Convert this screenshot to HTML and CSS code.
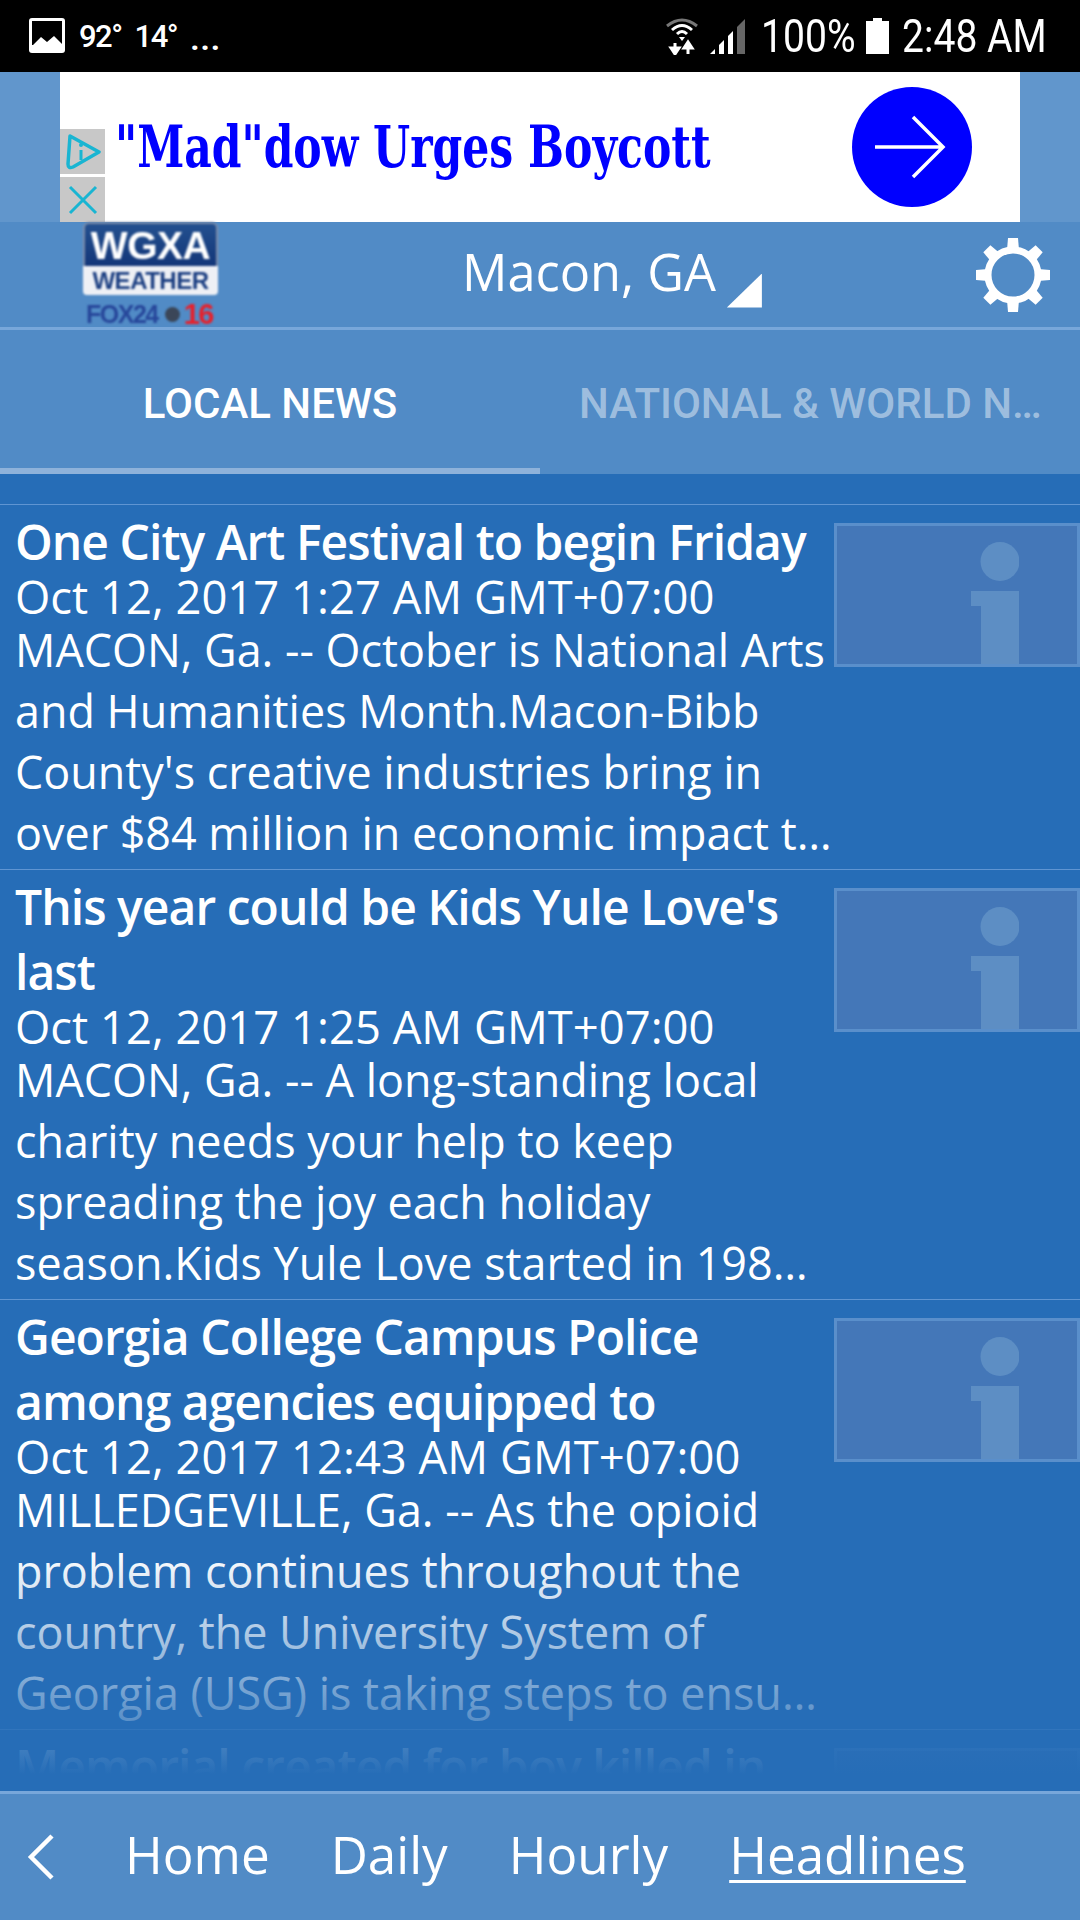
FILE: index.html
```html
<!DOCTYPE html>
<html lang="en">
<head>
  <meta charset="UTF-8">
  <meta name="viewport" content="width=device-width, initial-scale=1.0">
  <title>WGXA Weather Headlines</title>
  <link rel="stylesheet" href="styles.css">
</head>
<body>
  <div class="app">
    <div class="status-bar">
      <div class="status-left">
        <svg class="status-photo" width="36" height="36" viewBox="0 0 36 36">
          <rect x="0" y="0" width="36" height="35" rx="3" fill="#fff"/>
          <rect x="3" y="3" width="30" height="24" fill="#000"/>
          <path d="M3 28 L12 19 L18 24 L25 18 L33 26 L33 32 L3 32 Z" fill="#fff"/>
        </svg>
        <span class="temp">92°</span>
        <span class="temp">14°</span>
        <span class="more">...</span>
      </div>
      <div class="status-right">
        <svg class="status-wifi" width="32" height="38" viewBox="0 0 32 38">
          <path d="M1 9 Q16 -3 31 9" fill="none" stroke="#777" stroke-width="3"/>
          <path d="M6 13 Q16 4 26 13" fill="none" stroke="#fff" stroke-width="3"/>
          <path d="M11 17 Q16 12 21 17" fill="none" stroke="#fff" stroke-width="3"/>
          <path d="M13 20 L19 20 L16 24 Z" fill="#fff"/>
          <path d="M9 26 L9 33 M5 31 L9 37 L13 31 Z" stroke="#fff" stroke-width="3" fill="#fff"/>
          <path d="M22 37 L22 29 M18 31 L22 25 L26 31 Z" stroke="#fff" stroke-width="3" fill="#fff"/>
        </svg>
        <svg class="status-signal" width="36" height="36" viewBox="0 0 36 36">
          <path d="M0 36 L5 31 L5 36 Z" fill="#fff"/>
          <path d="M9 36 L9 27 L14 22 L14 36 Z" fill="#fff"/>
          <path d="M18 36 L18 18 L23 13 L23 36 Z" fill="#fff"/>
          <path d="M27 36 L27 9 L35 1 L35 36 Z" fill="#666"/>
        </svg>
        <span class="status-text battery-text">100%</span>
        <svg class="status-battery" width="23" height="36" viewBox="0 0 23 36">
          <path d="M7 0 H16 V3 H23 V36 H0 V3 H7 Z" fill="#fff"/>
        </svg>
        <span class="status-text clock-text">2:48 AM</span>
      </div>
    </div>

    <div class="ad-row">
      <div class="ad">
        <div class="ad-chips">
          <div class="ad-chip">
            <svg width="36" height="38" viewBox="0 0 36 38">
              <path d="M5 3 L34 19 L8 34 Q3 36 3 31 Z" fill="none" stroke="#19b5d2" stroke-width="3.5" stroke-linejoin="round"/>
              <path d="M16 17 V27" stroke="#19b5d2" stroke-width="3"/>
              <circle cx="16" cy="12" r="2" fill="#19b5d2"/>
            </svg>
          </div>
          <div class="ad-chip">
            <svg width="30" height="30" viewBox="0 0 30 30">
              <path d="M2 2 L28 28 M28 2 L2 28" stroke="#19b5d2" stroke-width="3"/>
            </svg>
          </div>
        </div>
        <div class="ad-title">"Mad"dow Urges Boycott</div>
        <div class="ad-button">
          <svg class="ad-arrow" width="72" height="64" viewBox="0 0 72 64">
            <path d="M1 32 H69 M39 2 L69 32 L39 62" fill="none" stroke="#fff" stroke-width="3.5"/>
          </svg>
        </div>
      </div>
    </div>

    <header class="app-header">
      <div class="logo">
        <div class="logo-top">WGXA</div>
        <div class="logo-mid">WEATHER</div>
        <div class="logo-bottom"><span class="logo-fox">FOX24</span><span class="logo-abc"></span><span class="logo-num">16</span></div>
      </div>
      <div class="location">
        <span>Macon, GA</span>
        <span class="location-arrow"></span>
      </div>
      <svg class="gear" width="78" height="78" viewBox="0 0 78 78">
        <circle cx="39" cy="39" r="25" fill="none" stroke="#fff" stroke-width="7"/>
        <g fill="#fff">
          <path d="M33 14 L34 2 H44 L45 14 Z"/>
          <path d="M33 14 L34 2 H44 L45 14 Z" transform="rotate(45 39 39)"/>
          <path d="M33 14 L34 2 H44 L45 14 Z" transform="rotate(90 39 39)"/>
          <path d="M33 14 L34 2 H44 L45 14 Z" transform="rotate(135 39 39)"/>
          <path d="M33 14 L34 2 H44 L45 14 Z" transform="rotate(180 39 39)"/>
          <path d="M33 14 L34 2 H44 L45 14 Z" transform="rotate(225 39 39)"/>
          <path d="M33 14 L34 2 H44 L45 14 Z" transform="rotate(270 39 39)"/>
          <path d="M33 14 L34 2 H44 L45 14 Z" transform="rotate(315 39 39)"/>
        </g>
      </svg>
    </header>

    <nav class="tabs">
      <div class="tab active">LOCAL NEWS</div>
      <div class="tab">NATIONAL &amp; WORLD NEWS</div>
    </nav>

    <main class="news-list">
      <article class="news-item">
        <div class="news-text">
          <h2>One City Art Festival to begin Friday</h2>
          <div class="news-date">Oct 12, 2017 1:27 AM GMT+07:00</div>
          <p>MACON, Ga. -- October is National Arts and Humanities Month.Macon-Bibb County's creative industries bring in over $84 million in economic impact t…</p>
        </div>
        <div class="news-thumb">
          <svg width="48" height="125" viewBox="0 0 48 125"><circle cx="29" cy="19.5" r="19.5"/><path d="M0 49 H48 V125 H10 V64 H0 Z"/></svg>
        </div>
      </article>
      <article class="news-item">
        <div class="news-text">
          <h2>This year could be Kids Yule Love's last</h2>
          <div class="news-date">Oct 12, 2017 1:25 AM GMT+07:00</div>
          <p>MACON, Ga. -- A long-standing local charity needs your help to keep spreading the joy each holiday season.Kids Yule Love started in 198…</p>
        </div>
        <div class="news-thumb">
          <svg width="48" height="125" viewBox="0 0 48 125"><circle cx="29" cy="19.5" r="19.5"/><path d="M0 49 H48 V125 H10 V64 H0 Z"/></svg>
        </div>
      </article>
      <article class="news-item">
        <div class="news-text">
          <h2>Georgia College Campus Police among agencies equipped to</h2>
          <div class="news-date">Oct 12, 2017 12:43 AM GMT+07:00</div>
          <p>MILLEDGEVILLE, Ga. -- As the opioid problem continues throughout the country, the University System of Georgia (USG) is taking steps to ensu…</p>
        </div>
        <div class="news-thumb">
          <svg width="48" height="125" viewBox="0 0 48 125"><circle cx="29" cy="19.5" r="19.5"/><path d="M0 49 H48 V125 H10 V64 H0 Z"/></svg>
        </div>
      </article>
      <article class="news-item">
        <div class="news-text">
          <h2>Memorial created for boy killed in</h2>
        </div>
        <div class="news-thumb"></div>
      </article>
      <div class="list-fade"></div>
    </main>

    <footer class="bottom-nav">
      <svg class="back" width="28" height="46" viewBox="0 0 28 46">
        <path d="M25 2 L4 23 L25 44" fill="none" stroke="#fff" stroke-width="4.5"/>
      </svg>
      <a href="#">Home</a>
      <a href="#">Daily</a>
      <a href="#">Hourly</a>
      <a href="#" class="current">Headlines</a>
    </footer>
  </div>
</body>
</html>
```

FILE: styles.css
```css
/* General Styles */
* {
  box-sizing: border-box;
}

body {
  margin: 0;
  font-family: 'Open Sans', 'Noto Sans', sans-serif;
  background-color: #266db7;
  color: white;
}

.app {
  width: 1080px;
  height: 1920px;
  display: flex;
  flex-direction: column;
  overflow: hidden;
}

/* Status Bar */
.status-bar {
  height: 72px;
  flex-shrink: 0;
  background-color: #000;
  display: flex;
  justify-content: space-between;
  align-items: center;
  padding: 0 33px 0 29px;
}

.status-left,
.status-right {
  display: flex;
  align-items: center;
}

.status-photo {
  margin-right: 14px;
}

.temp {
  font-family: 'Roboto', sans-serif;
  font-weight: 500;
  font-size: 31px;
  margin-right: 13px;
  letter-spacing: -1.5px;
}

.more {
  font-family: 'Roboto', sans-serif;
  font-weight: 700;
  font-size: 32px;
  letter-spacing: 1px;
  margin-top: 6px;
}

.status-wifi {
  margin-right: 12px;
}

.status-signal {
  margin-right: 15px;
}

.status-text {
  font-family: 'Roboto', sans-serif;
  font-size: 46px;
  display: inline-block;
  transform: scaleX(0.85);
  transform-origin: left center;
}

.battery-text {
  margin-right: -16px;
}

.clock-text {
  margin-right: -25px;
}

.status-battery {
  margin: 0 13px 0 9px;
}

/* Ad Banner */
.ad-row {
  height: 150px;
  flex-shrink: 0;
  background-color: #6196cc;
  padding: 0 60px;
}

.ad {
  height: 100%;
  background-color: white;
  display: flex;
  align-items: center;
  position: relative;
}

.ad-chips {
  align-self: flex-end;
  width: 45px;
  flex-shrink: 0;
  display: flex;
  flex-direction: column;
  gap: 3px;
}

.ad-chip {
  height: 45px;
  background-color: #c8c8c8;
  display: flex;
  align-items: center;
  justify-content: center;
}

.ad-title {
  flex: 1;
  min-width: 0;
  margin-left: 10px;
  font-family: 'DejaVu Serif', serif;
  font-weight: 700;
  font-size: 58px;
  color: #0000ff;
  white-space: nowrap;
  transform: scaleX(0.733);
  transform-origin: left center;
}

.ad-button {
  width: 120px;
  height: 120px;
  flex-shrink: 0;
  margin-right: 48px;
  border-radius: 50%;
  background-color: #0000ff;
  display: flex;
  align-items: center;
  justify-content: center;
}

.ad-arrow {
  margin-right: 5px;
}

/* Header */
.app-header {
  height: 108px;
  flex-shrink: 0;
  background-color: #518bc6;
  border-bottom: 3px solid #78a7da;
  display: flex;
  align-items: center;
  position: relative;
  padding: 0 28px 0 83px;
}

.logo {
  width: 135px;
  height: 105px;
  display: flex;
  flex-direction: column;
  text-align: center;
  font-family: 'Liberation Sans', sans-serif;
  font-weight: 700;
  filter: blur(1px);
}

.logo-top {
  height: 44px;
  background: linear-gradient(to bottom, #23508f, #133679);
  border: 2px solid #7a8ba8;
  border-bottom: none;
  border-radius: 6px 6px 0 0;
  font-size: 39px;
  line-height: 44px;
  letter-spacing: -0.5px;
}

.logo-mid {
  height: 29px;
  background-color: #eef0f5;
  border-radius: 0 0 4px 4px;
  color: #1c3f82;
  font-size: 24px;
  line-height: 29px;
  letter-spacing: -0.5px;
}

.logo-bottom {
  height: 24px;
  margin-top: 7px;
  font-size: 25px;
  line-height: 24px;
  display: flex;
  align-items: center;
  padding-left: 3px;
  letter-spacing: -1.5px;
}

.logo-fox {
  color: #27479a;
}

.logo-abc {
  width: 15px;
  height: 15px;
  margin: 0 4px 0 7px;
  border-radius: 50%;
  background-color: #3b4658;
}

.logo-num {
  color: #e8202a;
  font-size: 29px;
}

.location {
  margin-left: 244px;
  flex: 1;
  display: flex;
  align-items: center;
  font-size: 50.5px;
  font-weight: 400;
  margin-top: -6px;
}

.location-arrow {
  width: 35px;
  height: 34px;
  margin: 38px 0 0 11px;
  background-color: white;
  clip-path: polygon(100% 0, 100% 100%, 0 100%);
}

/* Tabs */
.tabs {
  height: 144px;
  flex-shrink: 0;
  background-color: #518bc6;
  display: flex;
}

.tab {
  width: 540px;
  padding: 5px 32px 0 39px;
  line-height: 138px;
  text-align: center;
  font-family: 'Roboto', sans-serif;
  font-weight: 500;
  font-size: 42px;
  color: rgba(255, 255, 255, 0.45);
  white-space: nowrap;
  overflow: hidden;
  text-overflow: ellipsis;
}

.tab.active {
  padding: 5px 36px 0;
  color: white;
  border-bottom: 6px solid #8eb2da;
}

/* News List */
.news-list {
  flex: 1;
  min-height: 0;
  padding-top: 30px;
  background-color: #266db7;
  position: relative;
  overflow: hidden;
}

.news-item {
  display: flex;
  border-top: 1px solid #5f95d2;
  padding-left: 15px;
}

.news-text {
  width: 819px;
  padding: 4px 0 6px;
}

.news-text h2 {
  margin: 0;
  font-size: 48px;
  line-height: 65px;
  font-weight: 600;
  letter-spacing: -0.95px;
}

.news-date {
  font-size: 45.4px;
  line-height: 45px;
}

.news-text p {
  margin: 0 -4px 0 0;
  font-size: 44.9px;
  line-height: 61px;
}

.news-thumb {
  width: 246px;
  height: 144px;
  margin-top: 18px;
  flex-shrink: 0;
  background-color: #4477b8;
  border: 3px solid #5a8fcb;
  display: flex;
  justify-content: flex-end;
  padding: 16px 58px 0 0;
  overflow: hidden;
}

.news-thumb svg {
  fill: #5d8ec4;
  flex-shrink: 0;
}

.list-fade {
  position: absolute;
  left: 0;
  right: 0;
  bottom: 0;
  height: 240px;
  background: linear-gradient(to bottom, rgba(38, 109, 183, 0), #266db7 93%);
}

/* Bottom Nav */
.bottom-nav {
  height: 129px;
  flex-shrink: 0;
  background-color: #518bc6;
  border-top: 3px solid #78a7da;
  display: flex;
  align-items: center;
  padding: 0 0 6px 27px;
}

.back {
  margin: 6px 70px 0 0;
}

.bottom-nav a {
  color: white;
  text-decoration: none;
  font-size: 51.2px;
  margin-right: 61px;
}

.bottom-nav a.current {
  text-decoration: underline;
  text-decoration-thickness: 3px;
  text-underline-offset: 6px;
}
```
